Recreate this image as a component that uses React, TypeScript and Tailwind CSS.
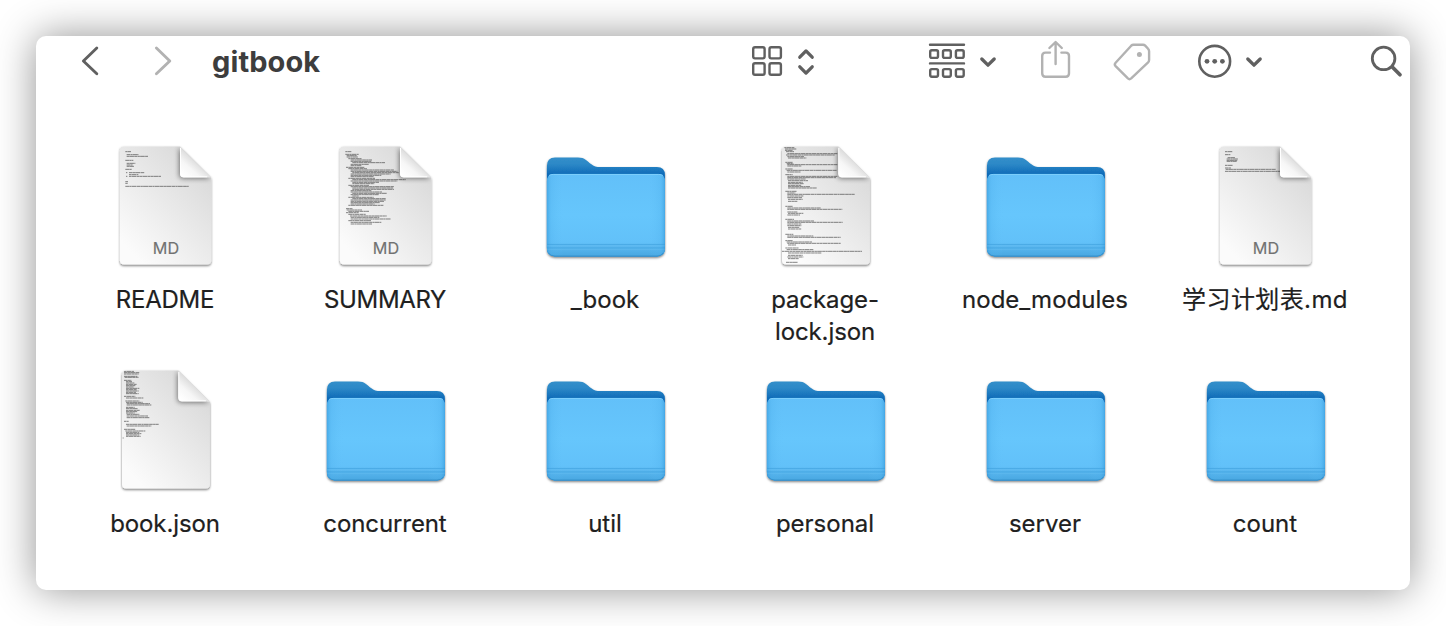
import type { ReactNode } from "react";

type Run = [y: number, x: number, w: number];
type Item = {
  name: string;
  kind: "folder" | "md" | "json";
  lines?: Run[];
  label?: string;
};

const readme: Run[] = [
  [50, 76, 17], [59, 80, 36], [64, 80, 64], [76, 76, 24], [85, 80, 26], [90, 80, 18], [94, 80, 22],
  [103, 76, 20], [113, 78, 4], [113, 87, 46], [119, 87, 28], [124, 78, 4], [124, 87, 96], [140, 76, 8], [145, 76, 8], [154, 76, 190],
];

const summary: Run[] = [
  [50, 76, 18], [58, 76, 40], [62, 80, 30], [66, 80, 34], [71, 85, 40], [75, 92, 64], [79, 92, 62],
  [83, 97, 98], [88, 92, 54], [92, 92, 32], [97, 78, 56], [101, 85, 56], [105, 92, 130], [109, 92, 140],
  [113, 97, 140], [117, 92, 120], [121, 92, 92], [125, 92, 70], [130, 85, 80], [134, 97, 160], [138, 92, 140],
  [142, 97, 80], [146, 97, 66], [151, 85, 62], [155, 92, 130], [159, 97, 122], [163, 97, 125], [167, 92, 62],
  [171, 92, 94], [175, 97, 104], [179, 92, 84], [183, 97, 20], [187, 85, 76], [191, 97, 100], [195, 92, 106],
  [199, 92, 100], [203, 92, 88], [207, 92, 72], [211, 85, 106], [221, 78, 20], [225, 80, 46], [229, 85, 62],
  [233, 78, 38], [238, 85, 52], [243, 90, 110], [247, 92, 86], [252, 92, 120], [257, 85, 68], [262, 92, 92], [267, 92, 64],
];

const plan: Run[] = [
  [50, 75, 22], [59, 75, 16], [68, 83, 22], [72, 80, 34], [76, 80, 32], [79, 80, 30], [91, 75, 24],
  [99, 75, 18], [103, 77, 150], [109, 75, 166],
];

const lock: Run[] = [
  [38, 73, 30], [42, 75, 35], [46, 75, 24], [50, 78, 24], [56, 82, 150], [60, 78, 146], [65, 82, 50], [69, 84, 55],
  [82, 76, 22], [86, 80, 20], [89, 82, 150], [93, 82, 42], [102, 76, 22], [106, 80, 150], [111, 82, 40],
  [119, 76, 22], [124, 82, 150], [128, 82, 146], [132, 82, 56], [137, 84, 60], [142, 84, 44], [146, 84, 48],
  [151, 84, 40], [155, 84, 66], [159, 84, 86], [169, 76, 34], [174, 82, 24], [178, 82, 202], [183, 82, 48],
  [188, 82, 44], [193, 84, 44], [199, 84, 28], [214, 76, 22], [219, 82, 100], [223, 82, 165], [231, 82, 30],
  [235, 84, 46], [240, 82, 38], [253, 76, 26], [258, 82, 80], [262, 82, 166], [267, 82, 42], [272, 82, 42],
  [277, 84, 34], [282, 84, 40], [298, 76, 24], [303, 82, 78], [307, 82, 160], [317, 76, 22], [321, 80, 76],
  [325, 82, 160], [330, 84, 24], [339, 76, 40], [344, 80, 80], [349, 66, 240], [354, 84, 100], [361, 84, 44],
  [366, 82, 48], [371, 84, 32], [382, 78, 36],
];

const book: Run[] = [
  [37, 72, 30], [41, 72, 46], [45, 72, 44], [52, 72, 40], [55, 74, 42], [64, 72, 22], [68, 78, 18], [72, 78, 25],
  [76, 78, 32], [80, 78, 28], [84, 78, 24], [88, 78, 40], [92, 78, 32], [96, 78, 38], [100, 78, 30], [104, 78, 38],
  [112, 72, 34], [117, 78, 52], [126, 76, 42], [130, 78, 50], [134, 80, 70], [138, 80, 74], [145, 78, 26],
  [149, 78, 36], [154, 78, 42], [158, 78, 34], [162, 78, 26], [166, 80, 38], [171, 80, 64], [176, 80, 68],
  [187, 72, 14], [196, 78, 98], [201, 80, 74], [211, 72, 34], [216, 76, 60], [220, 78, 40], [224, 78, 46],
  [228, 78, 40], [232, 78, 44], [237, 68, 3],
];

const items: Item[] = [
  { name: "README", kind: "md", lines: readme, label: "tracking-[-0.2px]" },
  { name: "SUMMARY", kind: "md", lines: summary, label: "tracking-[-0.35px]" },
  { name: "_book", kind: "folder" },
  { name: "package-lock.json", kind: "json", lines: lock, label: "tracking-[-0.1px]" },
  { name: "node_modules", kind: "folder" },
  { name: "学习计划表.md", kind: "md", lines: plan, label: "tracking-[0.4px]" },
  { name: "book.json", kind: "json", lines: book, label: "tracking-[-0.1px]" },
  { name: "concurrent", kind: "folder", label: "tracking-[-0.1px]" },
  { name: "util", kind: "folder" },
  { name: "personal", kind: "folder" },
  { name: "server", kind: "folder" },
  { name: "count", kind: "folder" },
];

function Defs() {
  return (
    <svg className="absolute size-0" aria-hidden="true">
      <defs>
        <linearGradient id="paper" x1="1" y1="0.1" x2="0.25" y2="1">
          <stop offset="0" stopColor="#d6d6d6" />
          <stop offset="0.45" stopColor="#e7e7e7" />
          <stop offset="1" stopColor="#fbfbfb" />
        </linearGradient>
        <linearGradient id="curl" x1="0.1" y1="0.95" x2="0.55" y2="0.45">
          <stop offset="0" stopColor="#ffffff" />
          <stop offset="0.5" stopColor="#f6f6f6" />
          <stop offset="1" stopColor="#d9d9d9" />
        </linearGradient>
        <linearGradient id="back" x1="0" y1="0" x2="0" y2="1">
          <stop offset="0" stopColor="#338fca" />
          <stop offset="0.07" stopColor="#2c88c7" />
          <stop offset="0.17" stopColor="#0f6bb8" />
        </linearGradient>
        <linearGradient id="front" x1="0" y1="0" x2="0" y2="1">
          <stop offset="0" stopColor="#62c0f9" />
          <stop offset="0.5" stopColor="#66c6fc" />
          <stop offset="0.83" stopColor="#62c1f9" />
          <stop offset="0.86" stopColor="#5cb9f1" />
          <stop offset="1" stopColor="#48a7e1" />
        </linearGradient>
        <linearGradient id="sides" x1="0" y1="0" x2="1" y2="0">
          <stop offset="0" stopColor="#2e94d6" stopOpacity="0.55" />
          <stop offset="0.035" stopColor="#4fb0ec" stopOpacity="0.3" />
          <stop offset="0.14" stopColor="#62c1f9" stopOpacity="0" />
          <stop offset="0.86" stopColor="#62c1f9" stopOpacity="0" />
          <stop offset="0.965" stopColor="#4fb0ec" stopOpacity="0.3" />
          <stop offset="1" stopColor="#2e94d6" stopOpacity="0.55" />
        </linearGradient>
        <filter id="drop" x="-10%" y="-10%" width="120%" height="120%">
          <feDropShadow dx="0" dy="1.3" stdDeviation="1" floodColor="#000" floodOpacity="0.55" />
        </filter>
        <filter id="soft" x="-40%" y="-40%" width="180%" height="180%">
          <feGaussianBlur stdDeviation="2.6" />
        </filter>
      </defs>
    </svg>
  );
}

function Folder() {
  return (
    <svg viewBox="0 0 128 128" className="ml-[2px] size-32">
      <g filter="url(#drop)">
        <path
          d="M4.9 24Q4.9 15.4 13 15.4H36C43 15.4 45 19 49 22C52 24.5 54 25 59 25H115Q122.9 25 122.9 33V106Q122.9 114.4 114.9 114.4H13Q4.9 114.4 4.9 106Z"
          fill="url(#back)"
        />
      </g>
      <path d="M4.9 40Q4.9 32 11.5 32H116.5Q122.9 32 122.9 40V106Q122.9 114.4 114.9 114.4H13Q4.9 114.4 4.9 106Z" fill="url(#front)" />
      <path d="M4.9 40Q4.9 32 11.5 32H116.5Q122.9 32 122.9 40V106Q122.9 114.4 114.9 114.4H13Q4.9 114.4 4.9 106Z" fill="url(#sides)" />
      <path d="M7 33.5Q8.5 32.4 11.5 32.4H116.5Q119.5 32.4 121 33.5" fill="none" stroke="#82d0fc" strokeWidth="0.9" />
      <path d="M5 102.6H122.9M5 106H122.9" stroke="#399bd8" strokeWidth="0.8" opacity="0.65" />
      <path d="M5 103.8H122.9M5 107.2H122.9" stroke="#72c8f8" strokeWidth="0.6" opacity="0.5" />
      <path d="M6.5 110.9Q8.5 114 13 114H114.9Q119.3 114 121.3 110.9" fill="none" stroke="#2f8cc6" strokeWidth="0.9" opacity="0.8" />
    </svg>
  );
}

function Document({ kind, lines, id }: { kind: "md" | "json"; lines: Run[]; id: string }) {
  const md = kind === "md";
  const left = md ? 17.9 : 20;
  const right = md ? 109.2 : 107.9;
  const fold = md ? 78 : 76.3;
  const slant = right - fold;
  const shape = `M${left + 4} 4.4H${fold}L${right} ${4.4 + slant}V118.4Q${right} 122.4 ${right - 4} 122.4H${left + 4}Q${left} 122.4 ${left} 118.4V8.4Q${left} 4.4 ${left + 4} 4.4Z`;
  const flap = `M${fold} 4.4L${right} ${4.4 + slant}Q${right - 1} 35.4 ${right - 4} 35.4H${fold + 3.5}Q${fold} 35.4 ${fold} 32Z`;
  return (
    <svg viewBox="0 0 128 128" className="ml-[2px] size-32">
      <clipPath id={id}>
        <path d={shape} />
      </clipPath>
      <path d={shape} fill="url(#paper)" filter="url(#drop)" />
      <g clipPath={`url(#${id})`}>
        <g transform="translate(-2 -7) scale(0.3333)" stroke="#2c2c2c" strokeWidth="2.8" opacity="0.62">
          {lines.map(([y, x, w], i) => (
            <path key={i} d={`M${x} ${y}h${w}`} strokeDasharray={i % 2 ? "11 0.9 6 0.7 15 1.1" : "7 0.8 14 1 9 0.8"} />
          ))}
        </g>
        <path d={flap} fill="#000" opacity="0.5" filter="url(#soft)" transform="translate(-0.8 1)" />
      </g>
      <path d={flap} fill="url(#curl)" />
      <path d={`M${fold + 0.5} 6V32Q${fold + 0.5} 34.8 ${fold + 3.5} 34.8H${right - 4}`} fill="none" stroke="#fff" strokeWidth="1" />
      {md && (
        <text x="64" y="111.9" textAnchor="middle" fontSize="16.2" fill="#717171" stroke="#717171" strokeWidth="0.15" fontFamily="Inter, sans-serif">
          MD
        </text>
      )}
    </svg>
  );
}

/* Toolbar drawings share one vertical scale: y 36 to 87 spans the bar. */
function Tool({ x, w, className, children }: { x: number; w: number; className: string; children: ReactNode }) {
  return (
    <svg
      viewBox={`${x} 36 ${w} 51`}
      width={w}
      height={51}
      fill="none"
      strokeLinecap="round"
      strokeLinejoin="round"
      className={`shrink-0 ${className}`}
    >
      {children}
    </svg>
  );
}

function Toolbar() {
  return (
    <header className="flex h-[51px] items-center">
      <Tool x={80} w={20} className="ml-[44px] stroke-[#606060]">
        <path d="M96.8 48L83.4 61L96.8 73.8" strokeWidth="2.9" />
      </Tool>
      <Tool x={153} w={20} className="ml-[53px] stroke-[#b2b2b2]">
        <path d="M156.4 48L169.8 61L156.4 73.8" strokeWidth="2.9" />
      </Tool>
      <h1 className="ml-[39px] w-[538px] text-[29px] leading-[50px] font-bold tracking-[0.1px] text-[#3d3d3d]">gitbook</h1>
      <Tool x={750} w={66} className="stroke-[#606060]">
        <g strokeWidth="2.4">
          <rect x="753.2" y="47.2" width="11.4" height="11.2" rx="1.8" />
          <rect x="769.5" y="47.2" width="11.4" height="11.2" rx="1.8" />
          <rect x="753.2" y="63.3" width="11.4" height="11.4" rx="1.8" />
          <rect x="769.5" y="63.3" width="11.4" height="11.4" rx="1.8" />
        </g>
        <path d="M799.8 57.2L806 50.9L812.2 57.2M799.8 66.8L806 73.1L812.2 66.8" strokeWidth="3.3" />
      </Tool>
      <Tool x={926} w={74} className="ml-[110px] stroke-[#606060]">
        <path d="M930 44.7H964M930 63.4H964" strokeWidth="2.4" />
        <g strokeWidth="2.4">
          <rect x="930.2" y="50.3" width="7.8" height="7.6" rx="1.6" />
          <rect x="943" y="50.3" width="7.8" height="7.6" rx="1.6" />
          <rect x="955.9" y="50.3" width="7.8" height="7.6" rx="1.6" />
          <rect x="930.2" y="69.1" width="7.8" height="7.6" rx="1.6" />
          <rect x="943" y="69.1" width="7.8" height="7.6" rx="1.6" />
          <rect x="955.9" y="69.1" width="7.8" height="7.6" rx="1.6" />
        </g>
        <path d="M981.8 59L988 65.2L994.2 59" strokeWidth="3.3" />
      </Tool>
      <Tool x={1038} w={36} className="ml-[38px] stroke-[#b2b2b2]">
        <path d="M1050 52.6H1045.5Q1042.2 52.6 1042.2 56V73.2Q1042.2 76.7 1045.5 76.7H1065.7Q1069 76.7 1069 73.2V56Q1069 52.6 1065.7 52.6H1061.4M1055.6 64V42.4M1049.4 48L1055.6 42L1061.8 48" strokeWidth="2.4" />
      </Tool>
      <Tool x={1112} w={40} className="ml-[38px] stroke-[#b2b2b2]">
        <path d="M1133.5 44.7H1143Q1144.3 44.7 1145.2 45.6L1148.1 48.8Q1149.1 49.8 1149.1 51.2V60Q1149.1 61.4 1148.1 62.4L1131.2 78.4Q1129.5 79.9 1127.9 78.4L1115.6 66.1Q1114 64.4 1115.6 62.7L1131.2 45.7Q1132.2 44.7 1133.5 44.7Z" strokeWidth="2.4" />
        <circle cx="1139.4" cy="54.4" r="2.5" fill="#b2b2b2" stroke="none" />
      </Tool>
      <Tool x={1196} w={68} className="ml-[44px] stroke-[#606060]">
        <circle cx="1214.7" cy="61.3" r="15.4" strokeWidth="2.6" />
        <g fill="#606060" stroke="none">
          <circle cx="1207" cy="61.3" r="2.4" />
          <circle cx="1214.7" cy="61.3" r="2.4" />
          <circle cx="1222.4" cy="61.3" r="2.4" />
        </g>
        <path d="M1247.8 59L1254 65.2L1260.2 59" strokeWidth="3.3" />
      </Tool>
      <Tool x={1370} w={34} className="ml-[106px] stroke-[#606060]">
        <circle cx="1383.6" cy="58.4" r="11.3" strokeWidth="2.8" />
        <path d="M1392.3 67L1400 74.8" strokeWidth="3.7" />
      </Tool>
    </header>
  );
}

export default function App() {
  return (
    <div className="h-[626px] w-[1446px] overflow-hidden bg-white p-9 font-['Inter','Noto_Sans_CJK_SC',sans-serif]">
      <Defs />
      <main className="h-[554px] w-[1374px] rounded-[10px] bg-white shadow-[0_0_40px_rgba(0,0,0,0.43)]">
        <Toolbar />
        <section className="ml-[19px] grid w-[1320px] auto-rows-[224px] grid-cols-6 pt-[55px]">
          {items.map((item, i) => (
            <figure key={item.name} className="flex flex-col items-center">
              {item.kind === "folder" ? <Folder /> : <Document kind={item.kind} lines={item.lines ?? []} id={`page-${i}`} />}
              <figcaption
                className={`mt-[14px] w-[170px] text-center text-[24px] leading-8 text-[#202020] [-webkit-text-stroke:0.2px_#202020] ${item.label ?? ""}`}
              >
                {item.name}
              </figcaption>
            </figure>
          ))}
        </section>
      </main>
    </div>
  );
}
